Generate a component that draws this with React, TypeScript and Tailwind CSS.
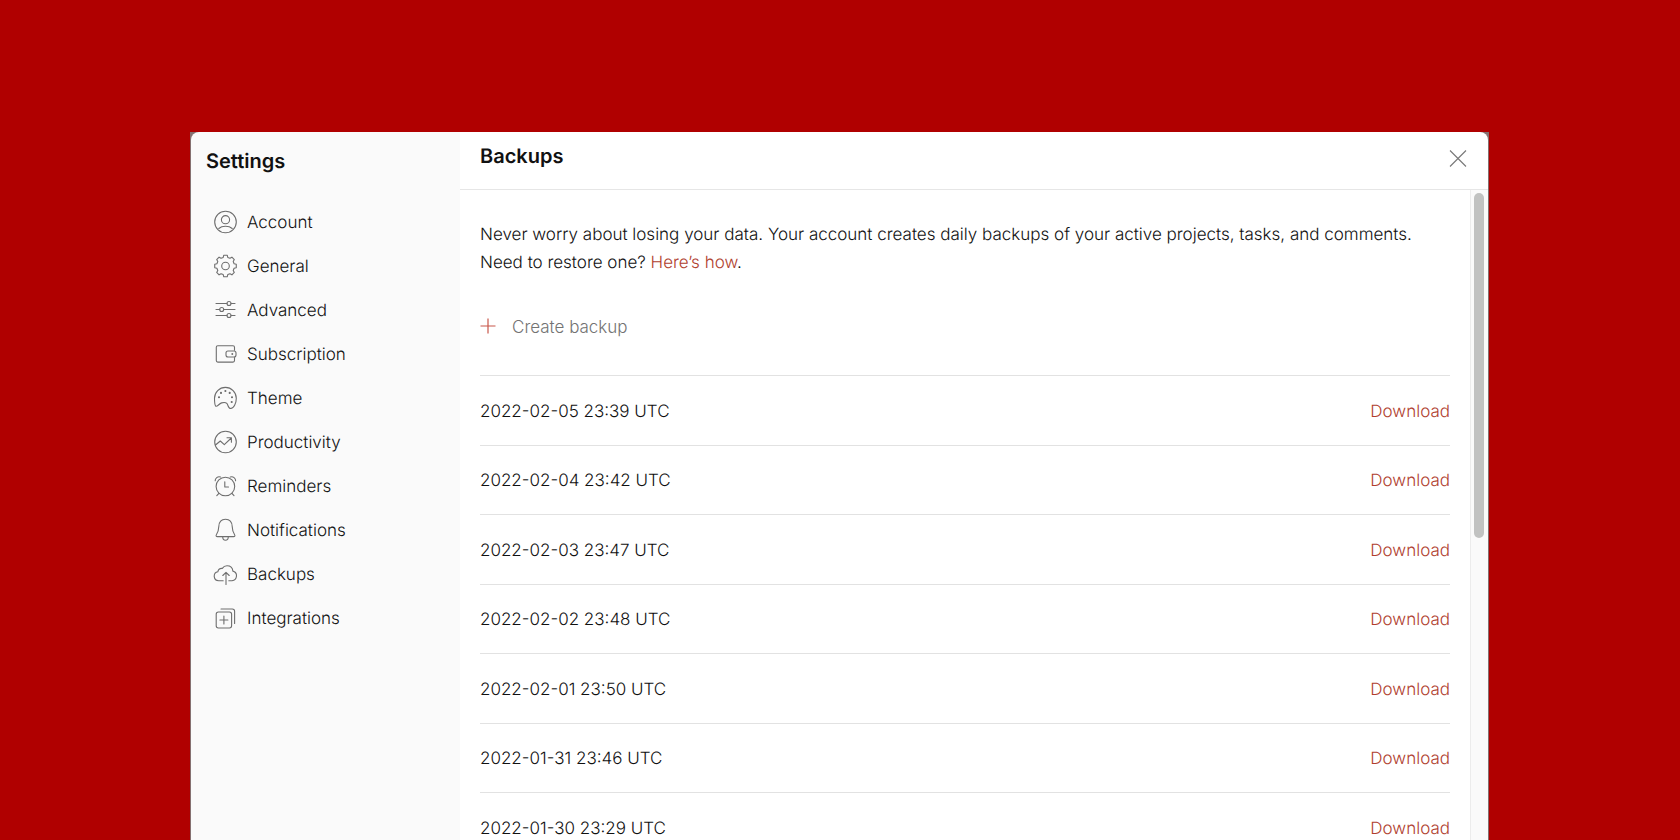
import type { ReactNode } from "react";

// Eight teeth, two points on the rim and two at the root of each
const gearPoints = Array.from({ length: 8 }, (_, i) => i * 45)
  .flatMap((a) => [
    [a - 15, 8.9],
    [a - 9, 10.9],
    [a + 9, 10.9],
    [a + 15, 8.9],
  ])
  .map(([deg, r]) => {
    const rad = (deg * Math.PI) / 180;
    return `${(12.5 + r * Math.sin(rad)).toFixed(2)},${(12 - r * Math.cos(rad)).toFixed(2)}`;
  })
  .join(" ");

function Icon({ children }: { children: ReactNode }) {
  return (
    <svg
      viewBox="0 0 24 24"
      className="h-6 w-6 shrink-0 text-[#6e6e6e]"
      fill="none"
      stroke="currentColor"
      strokeWidth="1.1"
      strokeLinecap="round"
      strokeLinejoin="round"
      aria-hidden="true"
    >
      {children}
    </svg>
  );
}

const navItems: { label: string; icon: ReactNode }[] = [
  {
    label: "Account",
    icon: (
      <>
        <circle cx="12.5" cy="12" r="10.8" />
        <circle cx="12.5" cy="9.7" r="4.1" />
        <path d="M5.800 18.500c1.600-1.500 4-2.300 6.700-2.300s5.100.8 6.700 2.300" />
      </>
    ),
  },
  {
    label: "General",
    icon: (
      <>
        <polygon points={gearPoints} />
        <circle cx="12.5" cy="12" r="3.8" />
      </>
    ),
  },
  {
    label: "Advanced",
    icon: (
      <>
        <path d="M3 5.500h11M18 5.500h4M3 11.500h3.700M10.700 11.500H22M3 17.500h11M18 17.500h4" />
        <circle cx="16" cy="5.5" r="2" />
        <circle cx="8.7" cy="11.5" r="2" />
        <circle cx="16" cy="17.5" r="2" />
      </>
    ),
  },
  {
    label: "Subscription",
    icon: (
      <>
        <path d="M21.500 8.300V5.200a1.500 1.500 0 0 0-1.500-1.500H4.800a1.500 1.500 0 0 0-1.500 1.500v13.400a1.500 1.500 0 0 0 1.500 1.500H20a1.500 1.500 0 0 0 1.500-1.500v-3" />
        <rect x="13" y="9" width="10" height="6" rx="2" />
        <circle cx="19.3" cy="12" r="0.4" fill="currentColor" />
      </>
    ),
  },
  {
    label: "Theme",
    icon: (
      <>
        <path d="M2.800 20.200C1.900 19.500 1.500 16 1.500 12.300a10.900 10.900 0 0 1 21.800 0c0 5.200-2.600 10.200-5.500 10.200-3.100 0-2.300-3.400-4-5.100-1.300-1.200-3.200-1-5.200-.5-2.600.7-4.400 4.200-5.800 3.300z" />
        <g fill="currentColor">
          <circle cx="6" cy="11.2" r="0.5" />
          <circle cx="8" cy="6.9" r="0.5" />
          <circle cx="12.4" cy="5" r="0.5" />
          <circle cx="16.7" cy="6.9" r="0.5" />
          <circle cx="19" cy="11.2" r="0.5" />
          <circle cx="18.7" cy="16" r="0.5" />
        </g>
      </>
    ),
  },
  {
    label: "Productivity",
    icon: (
      <>
        <circle cx="12.5" cy="12" r="10.8" />
        <path d="M2.500 15l4.800-4 4 3.600 7-6.600M14 7.800h4.400v4.400" />
      </>
    ),
  },
  {
    label: "Reminders",
    icon: (
      <>
        <circle cx="12.4" cy="12.5" r="9.3" />
        <path d="M11.800 7.800V13h3.700M2.200 6.700C2 4.400 4.700 1.900 7.500 3M22.600 6.700C22.800 4.400 20.100 1.900 17.300 3M5.900 19.300l-2.100 2.400M18.900 19.300l2.100 2.400" />
      </>
    ),
  },
  {
    label: "Notifications",
    icon: (
      <>
        <path d="M12.500 1.300c-4.300 0-6.500 3-6.700 7.200-.2 4.500-.9 6-2.300 8-.9 1.300-.3 2.100.9 2.100h16.200c1.200 0 1.800-.8.900-2.100-1.400-2-2.100-3.500-2.300-8-.2-4.200-2.400-7.200-6.700-7.200z" />
        <path d="M9.700 18.800c0 2 1.100 3.500 2.800 3.500s2.800-1.500 2.800-3.500" />
      </>
    ),
  },
  {
    label: "Backups",
    icon: (
      <path d="M10.200 18.700H5.700a4.500 4.500 0 0 1-.9-8.900 4.200 4.200 0 0 1 4.500-3.400c1.200-1.800 2.800-2.600 4.700-2.600 3.400 0 5.600 2.300 5.900 5.300a4.900 4.900 0 0 1-.9 9.600h-3.200M13 22.500V10.300M9.800 13.500l3.200-3.200 3.200 3.200" />
    ),
  },
  {
    label: "Integrations",
    icon: (
      <>
        <rect x="3.2" y="6" width="15.4" height="16" rx="2.2" />
        <path d="M8 3h11.300a2.300 2.300 0 0 1 2.300 2.300V17.500M10.900 10v8M6.900 14h8" />
      </>
    ),
  },
];

const backups = [
  "2022-02-05 23:39 UTC",
  "2022-02-04 23:42 UTC",
  "2022-02-03 23:47 UTC",
  "2022-02-02 23:48 UTC",
  "2022-02-01 23:50 UTC",
  "2022-01-31 23:46 UTC",
  "2022-01-30 23:29 UTC",
];

function Sidebar() {
  return (
    <aside className="w-[269px] shrink-0 bg-[#fafafa] px-[15px] pt-[15px]">
      <h1 className="text-[20px] leading-7 font-semibold">Settings</h1>
      <nav className="mt-[25px]">
        <ul>
          {navItems.map(({ label, icon }) => (
            <li key={label}>
              <a href="#" className="flex h-11 items-center gap-2.5 px-[7px]">
                <Icon>{icon}</Icon>
                <span className="pt-1">{label}</span>
              </a>
            </li>
          ))}
        </ul>
      </nav>
    </aside>
  );
}

function BackupsPanel() {
  return (
    <section className="flex min-w-0 flex-1 flex-col bg-white">
      <header className="flex h-[58px] shrink-0 items-start justify-between border-b border-[#e6e6e6] px-5">
        <h2 className="pt-2.5 text-[20px] leading-7 font-semibold">Backups</h2>
        <button type="button" aria-label="Close" className="mt-4">
          <svg viewBox="0 0 20 20" className="h-5 w-5" fill="none" stroke="#777" strokeWidth="1.1" aria-hidden="true">
            <path d="M2 2.500l16 16M18 2.500l-16 16" />
          </svg>
        </button>
      </header>

      <div className="flex min-h-0 flex-1">
        <div className="min-w-0 flex-1 overflow-hidden px-5 pt-[31px]">
          <p className="leading-7">
            Never worry about losing your data. Your account creates daily backups of your active projects, tasks, and
            comments.
            <br />
            Need to restore one?{" "}
            <a href="#" className="text-[#b03e2e]">
              Here’s how
            </a>
            .
          </p>

          <button type="button" className="mt-[35px] flex h-7 items-center gap-4 text-[#737373]">
            <svg viewBox="0 0 16 16" className="h-4 w-4" fill="none" stroke="#c8574a" strokeWidth="1.2" aria-hidden="true">
              <path d="M8 0.500v15M0.500 8h15" />
            </svg>
            <span className="pt-1">Create backup</span>
          </button>

          <ul className="mt-[35px] grid auto-rows-[70px_69px]">
            {backups.map((date) => (
              <li key={date} className="flex items-center justify-between border-t border-[#e2e2e2] pt-1">
                <span>{date}</span>
                <a href="#" className="text-[#b03e2e]">
                  Download
                </a>
              </li>
            ))}
          </ul>
        </div>

        {/* Scrollbar */}
        <div className="w-[18px] shrink-0 border-l border-[#ececec] bg-[#fafafa] px-[3px] pt-[3px]">
          <div className="h-[345px] w-2.5 rounded-full bg-[#c1c2c1]" />
        </div>
      </div>
    </section>
  );
}

export default function App() {
  return (
    <main className="flex h-screen overflow-hidden bg-[#b00000] pt-[132px] pr-[191px] pl-[190px] font-['Inter',sans-serif] text-[17px] font-[350] text-[#111111] [text-rendering:geometricPrecision]">
      <div className="flex min-w-0 flex-1 bg-[#857070] px-px">
        <div className="flex min-w-0 flex-1 overflow-hidden rounded-t-lg">
          <Sidebar />
          <BackupsPanel />
        </div>
      </div>
    </main>
  );
}
